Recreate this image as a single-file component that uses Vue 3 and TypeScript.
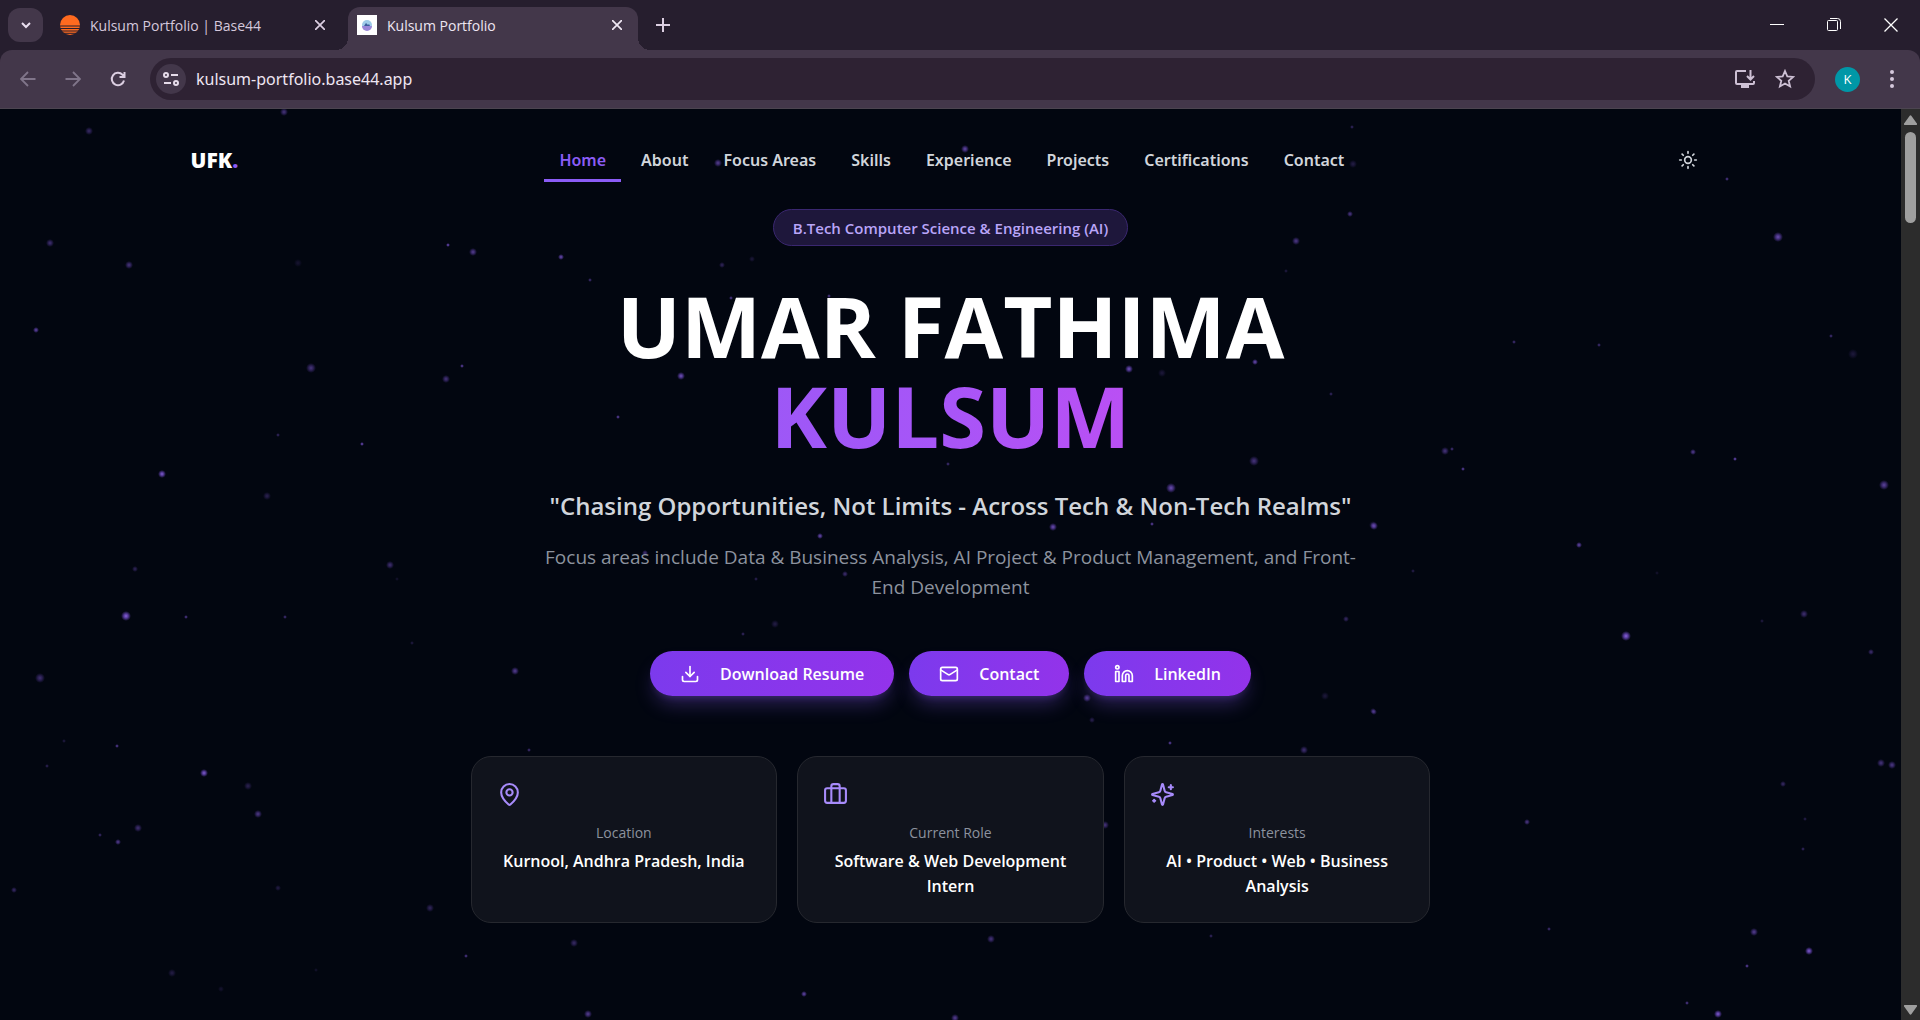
<script setup lang="ts">
interface Star {
  x: number
  y: number
  r: number
  o: number
}

interface Card {
  label: string
  value: string
  paths: string[]
}

const navItems: string[] = ['Home', 'About', 'Focus Areas', 'Skills', 'Experience', 'Projects', 'Certifications', 'Contact']

const actions: { label: string; paths: string[] }[] = [
  {
    label: 'Download Resume',
    paths: ['M21 15v4a2 2 0 0 1-2 2H5a2 2 0 0 1-2-2v-4', 'M7 10l5 5 5-5', 'M12 15V3'],
  },
  {
    label: 'Contact',
    paths: ['M4 4h16a2 2 0 0 1 2 2v12a2 2 0 0 1-2 2H4a2 2 0 0 1-2-2V6a2 2 0 0 1 2-2z', 'M22 7l-9 5.7a2 2 0 0 1-2 0L2 7'],
  },
  {
    label: 'LinkedIn',
    paths: [
      'M16 8a6 6 0 0 1 6 6v7h-4v-7a2 2 0 0 0-4 0v7h-4v-7a6 6 0 0 1 6-6z',
      'M2 9h4v12H2z',
      'M4 2a2 2 0 1 1 0 4a2 2 0 1 1 0-4z',
    ],
  },
]

const cards: Card[] = [
  {
    label: 'Location',
    value: 'Kurnool, Andhra Pradesh, India',
    paths: [
      'M20 10c0 4.993-5.539 10.193-7.399 11.799a1 1 0 0 1-1.202 0C9.539 20.193 4 14.993 4 10a8 8 0 0 1 16 0',
      'M12 7a3 3 0 1 1 0 6a3 3 0 1 1 0-6z',
    ],
  },
  {
    label: 'Current Role',
    value: 'Software & Web Development Intern',
    paths: [
      'M16 20V4a2 2 0 0 0-2-2h-4a2 2 0 0 0-2 2v16',
      'M4 6h16a2 2 0 0 1 2 2v10a2 2 0 0 1-2 2H4a2 2 0 0 1-2-2V8a2 2 0 0 1 2-2z',
    ],
  },
  {
    label: 'Interests',
    value: 'AI • Product • Web • Business Analysis',
    paths: [
      'M9.937 15.5A2 2 0 0 0 8.5 14.063l-6.135-1.582a.5.5 0 0 1 0-.962L8.5 9.936A2 2 0 0 0 9.937 8.5l1.582-6.135a.5.5 0 0 1 .963 0L14.063 8.5A2 2 0 0 0 15.5 9.937l6.135 1.581a.5.5 0 0 1 0 .964L15.5 14.063a2 2 0 0 0-1.437 1.437l-1.582 6.135a.5.5 0 0 1-.963 0z',
      'M20 3v4',
      'M22 5h-4',
      'M4 17v2',
      'M5 18H3',
    ],
  },
]

// x, y, radius, opacity; measured from the top left of the page area
const starData: number[][] = [
  [50, 134, 4, 0.45], [129, 156, 4, 0.5], [298, 154, 4, 0.15], [448, 136, 2, 0.8], [473, 143, 4, 0.6],
  [561, 148, 3, 0.75], [590, 171, 2, 0.5], [36, 221, 3, 0.7], [311, 259, 5, 0.5], [462, 257, 2, 0.7],
  [446, 270, 4, 0.5], [278, 326, 2, 0.4], [362, 335, 2, 0.8], [162, 365, 4, 0.9], [267, 387, 4, 0.3],
  [135, 460, 3, 0.35], [390, 456, 4, 0.45], [397, 470, 2, 0.15], [126, 507, 5, 0.95], [186, 508, 2, 0.6],
  [285, 508, 2, 0.5], [412, 534, 2, 0.25], [515, 562, 4, 0.6], [40, 569, 5, 0.45], [64, 632, 2, 0.25],
  [117, 637, 2, 0.65], [47, 657, 2, 0.35], [204, 664, 4, 0.9], [248, 677, 4, 0.3], [258, 705, 4, 0.55],
  [138, 719, 4, 0.45], [100, 726, 2, 0.45], [118, 733, 3, 0.6], [14, 781, 3, 0.4], [278, 779, 3, 0.25],
  [430, 799, 4, 0.35], [529, 641, 2, 0.5], [574, 834, 4, 0.4], [466, 847, 2, 0.6], [316, 861, 2, 0.15],
  [172, 864, 4, 0.25], [221, 880, 3, 0.15], [588, 905, 4, 0.6], [1778, 128, 5, 0.75], [1514, 233, 2, 0.5],
  [1599, 236, 2, 0.5], [1831, 227, 2, 0.5], [1853, 245, 5, 0.2], [1445, 342, 4, 0.5], [1452, 340, 2, 0.5],
  [1463, 360, 2, 0.7], [1693, 343, 3, 0.6], [1735, 350, 2, 0.8], [1884, 376, 5, 0.65], [1374, 417, 4, 0.7],
  [1579, 436, 3, 0.7], [1413, 462, 2, 0.3], [1657, 464, 2, 0.15], [1804, 505, 4, 0.45], [1762, 512, 2, 0.25],
  [1626, 527, 5, 0.95], [1871, 543, 3, 0.45], [1374, 603, 3, 0.45], [1881, 654, 4, 0.5], [1892, 656, 4, 0.55],
  [1783, 675, 3, 0.4], [1527, 713, 3, 0.55], [1805, 710, 2, 0.3], [1803, 740, 2, 0.4], [1549, 820, 2, 0.5],
  [1754, 823, 4, 0.6], [1809, 842, 4, 0.9], [1747, 857, 2, 0.7], [1687, 894, 2, 0.6], [1718, 905, 4, 0.9],
  [722, 156, 3, 0.35], [731, 189, 2, 0.6], [829, 187, 2, 0.6], [681, 267, 4, 0.8], [1129, 260, 4, 0.8],
  [1162, 264, 4, 0.2], [1255, 253, 3, 0.75], [618, 308, 2, 0.7], [948, 355, 2, 0.5], [1254, 352, 5, 0.5],
  [1171, 379, 5, 0.75], [1053, 418, 4, 0.75], [1152, 415, 2, 0.7], [820, 427, 3, 0.75], [645, 444, 3, 0.5],
  [845, 465, 3, 0.45], [756, 470, 2, 0.35], [1286, 162, 2, 0.25], [679, 398, 3, 0.25], [965, 40, 4, 0.7],
  [1352, 18, 2, 0.4], [1353, 55, 4, 0.25], [1350, 105, 3, 0.55], [1296, 132, 4, 0.55], [718, 54, 4, 0.6],
  [752, 150, 3, 0.2], [89, 22, 4, 0.4], [284, 3, 4, 0.5], [1727, 70, 2, 0.6], [1331, 285, 2, 0.4],
  [775, 515, 4, 0.25], [743, 525, 2, 0.4], [1087, 589, 4, 0.6], [1092, 611, 3, 0.3], [1325, 587, 4, 0.2],
  [1373, 602, 3, 0.4], [1304, 641, 4, 0.45], [1170, 634, 2, 0.7], [1105, 716, 4, 0.5], [991, 830, 4, 0.5],
  [804, 885, 3, 0.7], [955, 909, 4, 0.6], [1211, 827, 2, 0.4], [1346, 510, 3, 0.4], [1373, 416, 4, 0.3],
]

const stars: Star[] = starData.map(([x, y, r, o]) => ({ x, y, r, o }))
</script>

<template>
  <div class="window">
    <div class="tabstrip">
      <button class="tab-search" aria-label="Search tabs">
        <svg width="12" height="12" viewBox="0 0 12 12" fill="none" stroke="#eadff0" stroke-width="2"><path d="M2 4l4 4 4-4" /></svg>
      </button>
      <div class="tab first">
        <svg class="favicon" width="20" height="20" viewBox="0 0 20 20">
          <circle cx="10" cy="10" r="10" fill="#ff6a1f" />
          <path d="M0 11h20M0 13.500h20M1 16h18M3 18.300h14" stroke="#261e2e" stroke-width="1" />
        </svg>
        <span class="tab-title">Kulsum Portfolio | Base44</span>
        <button class="tab-close" aria-label="Close tab">
          <svg width="10" height="10" viewBox="0 0 10 10" stroke="#dccfe2" stroke-width="1.700"><path d="M0 0l10 10M10 0L0 10" /></svg>
        </button>
      </div>
      <div class="tab active">
        <svg class="favicon" width="20" height="20" viewBox="0 0 20 20">
          <path d="M0 0h20v20H0z" fill="#fff" />
          <circle cx="10" cy="10" r="5" fill="#9ecbe8" />
          <path d="M5 11a5 5 0 0 0 10 0z" fill="#9a86d8" />
          <path d="M7 11l2-3 2 2 1-1 1 2z" fill="#3b5c9c" />
        </svg>
        <span class="tab-title">Kulsum Portfolio</span>
        <button class="tab-close" aria-label="Close tab">
          <svg width="10" height="10" viewBox="0 0 10 10" stroke="#f0e8f4" stroke-width="1.700"><path d="M0 0l10 10M10 0L0 10" /></svg>
        </button>
      </div>
      <button class="new-tab" aria-label="New tab">
        <svg width="14" height="14" viewBox="0 0 14 14" stroke="#dccfe2" stroke-width="2"><path d="M7 0v14M0 7h14" /></svg>
      </button>
      <div class="controls">
        <button aria-label="Minimize">
          <svg width="14" height="14" viewBox="0 0 14 14" stroke="#fff"><path d="M0 6.500h14" /></svg>
        </button>
        <button aria-label="Restore">
          <svg width="14" height="14" viewBox="0 0 14 14" fill="none" stroke="#fff">
            <rect x="0.500" y="2.500" width="10" height="10" rx="1" />
            <path d="M3 .5h7.500a3 3 0 0 1 3 3V11" />
          </svg>
        </button>
        <button aria-label="Close">
          <svg width="14" height="14" viewBox="0 0 14 14" stroke="#fff" stroke-width="1.300"><path d="M.5.5l13 13M13.500.5l-13 13" /></svg>
        </button>
      </div>
    </div>

    <div class="toolbar">
      <button class="tool" aria-label="Back">
        <svg width="16" height="16" viewBox="0 0 16 16" fill="none" stroke="#80758a" stroke-width="1.800"><path d="M15.500 8H1.500M8 1L1 8l7 7" /></svg>
      </button>
      <button class="tool" aria-label="Forward">
        <svg width="16" height="16" viewBox="0 0 16 16" fill="none" stroke="#80758a" stroke-width="1.800"><path d="M.5 8h14M8 1l7 7-7 7" /></svg>
      </button>
      <button class="tool" aria-label="Reload">
        <svg width="16" height="16" viewBox="0 0 16 16" fill="none" stroke="#dccfe2" stroke-width="2"><path d="M14 9.500A6.200 6.200 0 1 1 12.500 3.700L14.500 5.500M14.500 1v5H9.500" /></svg>
      </button>
      <div class="omnibox">
        <button class="site-info" aria-label="Site information">
          <svg width="16" height="14" viewBox="0 0 16 14" fill="none" stroke="#e6dcea" stroke-width="2">
            <circle cx="3" cy="3" r="2" />
            <path d="M8 3h7M1 11h7" />
            <circle cx="13" cy="11" r="2" />
          </svg>
        </button>
        <input class="url" type="text" aria-label="Address" value="kulsum-portfolio.base44.app" />
        <button class="omni-icon" aria-label="Install app">
          <svg width="20" height="18" viewBox="0 0 20 18" fill="none" stroke="#cdc0d4" stroke-width="2">
            <path d="M11 1H2a1 1 0 0 0-1 1v11a1 1 0 0 0 1 1h16a1 1 0 0 0 1-1v-2M15.500 0v9M12 6l3.500 3.500L19 6" />
            <path d="M7 15.500h6v1.500H7z" />
          </svg>
        </button>
        <button class="omni-icon" aria-label="Bookmark">
          <svg width="20" height="20" viewBox="0 0 20 20" fill="none" stroke="#cdc0d4" stroke-width="1.800"><path d="M10 2l2.300 5.400 5.900.5-4.500 3.900 1.400 5.700L10 14.500l-5.100 3 1.400-5.700-4.500-3.900 5.900-.5z" /></svg>
        </button>
      </div>
      <button class="avatar" aria-label="Profile">K</button>
      <button class="menu" aria-label="Menu">
        <svg width="4" height="18" viewBox="0 0 4 18" fill="#d5c8dc"><circle cx="2" cy="2" r="2" /><circle cx="2" cy="9" r="2" /><circle cx="2" cy="16" r="2" /></svg>
      </button>
    </div>

    <div class="viewport">
      <div class="page">
        <svg class="stars" aria-hidden="true">
          <defs>
            <radialGradient id="glow">
              <stop offset="0" stop-color="#8f68e8" />
              <stop offset="0.450" stop-color="#7b52d6" stop-opacity="0.700" />
              <stop offset="1" stop-color="#6b45c8" stop-opacity="0" />
            </radialGradient>
          </defs>
          <circle v-for="(s, i) in stars" :key="i" :cx="s.x" :cy="s.y" :r="s.r" :opacity="s.o" fill="url(#glow)" />
        </svg>

        <header class="header">
          <a class="logo" href="#home">UFK<span>.</span></a>
          <nav class="nav">
            <a v-for="(item, i) in navItems" :key="item" href="#" :class="{ current: i === 0 }">{{ item }}</a>
          </nav>
          <button class="theme" aria-label="Toggle theme">
            <svg width="20" height="20" viewBox="0 0 24 24" fill="none" stroke="#d1d5db" stroke-width="2" stroke-linecap="round">
              <circle cx="12" cy="12" r="4" />
              <path d="M12 2v2M12 20v2M4.930 4.930l1.410 1.410M17.660 17.660l1.410 1.410M2 12h2M20 12h2M6.340 17.660l-1.410 1.410M19.070 4.930l-1.410 1.410" />
            </svg>
          </button>
        </header>

        <main class="hero">
          <div class="pill">B.Tech Computer Science &amp; Engineering (AI)</div>
          <h1>UMAR FATHIMA<span>KULSUM</span></h1>
          <p class="tagline">"Chasing Opportunities, Not Limits - Across Tech &amp; Non-Tech Realms"</p>
          <p class="summary">Focus areas include Data &amp; Business Analysis, AI Project &amp; Product Management, and Front-End Development</p>
          <div class="actions">
            <button v-for="a in actions" :key="a.label">
              <svg width="20" height="20" viewBox="0 0 24 24"><path v-for="p in a.paths" :key="p" :d="p" /></svg>
              {{ a.label }}
            </button>
          </div>
          <div class="cards">
            <section v-for="c in cards" :key="c.label" class="card">
              <svg width="25" height="25" viewBox="0 0 24 24"><path v-for="p in c.paths" :key="p" :d="p" /></svg>
              <div class="card-label">{{ c.label }}</div>
              <div class="card-value">{{ c.value }}</div>
            </section>
          </div>
        </main>
      </div>
      <div class="scrollbar">
        <svg width="13" height="10" viewBox="0 0 13 10" fill="#9f9f9f"><path d="M5.500 1a1.200 1.200 0 0 1 2 0L12.500 8a1 1 0 0 1-1 2h-10a1 1 0 0 1-1-2z" /></svg>
        <div class="thumb"></div>
        <svg class="down" width="13" height="10" viewBox="0 0 13 10" fill="#9f9f9f"><path d="M5.500 9a1.200 1.200 0 0 0 2 0L12.500 2a1 1 0 0 0-1-2h-10a1 1 0 0 0-1 2z" /></svg>
      </div>
    </div>
  </div>
</template>

<style>
body {
  margin: 0;
  background: #020610;
}
</style>

<style scoped>
* {
  box-sizing: border-box;
}

.window {
  display: flex;
  flex-direction: column;
  min-height: 100vh;
  font-family: "Open Sans", "Noto Sans", sans-serif;
  background: #261e2e;
}

button {
  display: flex;
  align-items: center;
  justify-content: center;
  padding: 0;
  border: 0;
  background: none;
  font-family: inherit;
}

svg {
  display: block;
  flex: none;
}

.tabstrip {
  display: flex;
  align-items: center;
  height: 50px;
  padding-left: 8px;
  padding-right: 1px;
}

.tab-search {
  width: 35px;
  height: 34px;
  border-radius: 12px;
  background: #43374a;
}

.tab {
  display: flex;
  align-items: center;
  gap: 10px;
  height: 43px;
  margin-top: 7px;
  padding-bottom: 7px;
  color: #d5c8dc;
  font-size: 14px;
}

.first {
  width: 305px;
  padding-left: 17px;
  padding-right: 23px;
}

.active {
  position: relative;
  width: 290px;
  padding-left: 9px;
  padding-right: 16px;
  border-radius: 12px 12px 0 0;
  background: #43374a;
  color: #eee6f2;
}

.active::before,
.active::after {
  content: "";
  position: absolute;
  bottom: 0;
  width: 12px;
  height: 12px;
}

.active::before {
  right: 100%;
  background: radial-gradient(circle at 0 0, transparent 12px, #43374a 12px);
}

.active::after {
  left: 100%;
  background: radial-gradient(circle at 100% 0, transparent 12px, #43374a 12px);
}

.tab-title {
  flex: 1;
  white-space: nowrap;
}

.new-tab {
  width: 50px;
  height: 34px;
}

.controls {
  display: flex;
  margin-left: auto;
}

.controls button {
  width: 57px;
  height: 48px;
}

.toolbar {
  display: flex;
  align-items: center;
  height: 59px;
  padding: 0 16px 0 5px;
  border-bottom: 1px solid #4c4550;
  border-radius: 12px 12px 0 0;
  background: #43374a;
}

.tool {
  width: 45px;
  height: 40px;
}

.omnibox {
  display: flex;
  flex: 1;
  align-items: center;
  height: 42px;
  margin-left: 10px;
  padding: 0 10px 0 6px;
  border-radius: 21px;
  background: #2e2233;
}

.site-info {
  width: 30px;
  height: 30px;
  border-radius: 50%;
  background: #43374a;
}

.url {
  flex: 1;
  min-width: 0;
  padding: 0 10px;
  border: 0;
  outline: 0;
  background: none;
  color: #eee6f2;
  font: 16px "Noto Sans", "Open Sans", sans-serif;
}

.omni-icon {
  width: 40px;
  height: 40px;
}

.avatar {
  width: 25px;
  height: 25px;
  margin: 0 20px;
  border-radius: 50%;
  background: #0097a7;
  color: #fff;
  font-size: 13px;
}

.menu {
  width: 24px;
  height: 30px;
}

.viewport {
  display: flex;
  flex: 1;
  background: #020610;
}

.page {
  position: relative;
  flex: 1;
  overflow: hidden;
}

.scrollbar {
  display: flex;
  flex-direction: column;
  align-items: center;
  width: 19px;
  padding: 6px 0 5px;
  background: #2c2c2c;
}

.thumb {
  width: 11px;
  height: 91px;
  margin-top: 7px;
  border-radius: 6px;
  background: #9f9f9f;
}

.down {
  margin-top: auto;
}

.stars {
  position: absolute;
  inset: 0;
  width: 100%;
  height: 100%;
}

.header {
  position: relative;
  display: flex;
  align-items: center;
  justify-content: space-between;
  max-width: 1600px;
  margin: 0 auto;
  padding: 28px 40px 0;
}

.logo {
  color: #fff;
  font-size: 21px;
  font-weight: 800;
  line-height: 30px;
  text-decoration: none;
}

.logo span {
  color: #8b5cf6;
}

.nav {
  display: flex;
  gap: 5px;
}

.nav a {
  height: 45px;
  padding: 0 15px;
  border-bottom: 3px solid transparent;
  color: #d1d5db;
  font-family: "Noto Sans", "Open Sans", sans-serif;
  font-size: 16px;
  font-weight: 600;
  line-height: 47px;
  text-decoration: none;
}

.nav .current {
  border-image: linear-gradient(#8b5cf6, #8b5cf6) 1;
  border-bottom-color: #8b5cf6;
  color: #8b5cf6;
}

.theme {
  width: 45px;
  height: 45px;
}

.hero {
  position: relative;
  display: flex;
  flex-direction: column;
  align-items: center;
  max-width: 960px;
  margin: 27px auto 97px;
  text-align: center;
}

.pill {
  height: 37px;
  padding: 0 19px;
  border: 1px solid #3a2770;
  border-radius: 19px;
  background: #1e173b;
  color: #b9a5f8;
  font-size: 15px;
  font-weight: 600;
  line-height: 37px;
}

h1 {
  width: 100%;
  margin: 34px 0 28px;
  color: #fff;
  font-size: 85px;
  font-weight: 700;
  line-height: 90px;
}

h1 span {
  display: block;
  background: linear-gradient(to right, #8b5cf6, #a855f7, #d946ef);
  background-clip: text;
  color: transparent;
}

.tagline {
  margin: 0 0 19px;
  color: #d1d5db;
  font-size: 24px;
  font-weight: 600;
  line-height: 35px;
}

.summary {
  max-width: 840px;
  margin: 0 0 49px;
  color: #8c929e;
  font-size: 19px;
  line-height: 30px;
}

.actions {
  display: flex;
  gap: 15px;
  margin-bottom: 60px;
}

.actions button {
  gap: 20px;
  height: 45px;
  padding: 0 30px;
  border-radius: 23px;
  background: linear-gradient(to right, #7c3aed, #9333ea);
  box-shadow: 0 12px 19px -4px rgba(139, 92, 246, 0.3), 0 5px 8px -5px rgba(139, 92, 246, 0.3);
  color: #fff;
  font-size: 16px;
  font-weight: 600;
}

.actions svg,
.card svg {
  fill: none;
  stroke: currentColor;
  stroke-width: 2;
  stroke-linecap: round;
  stroke-linejoin: round;
}

.cards {
  display: grid;
  grid-template-columns: repeat(3, 1fr);
  gap: 20px;
  width: 100%;
}

.card {
  padding: 25px 25px 23px;
  border: 1px solid #26282f;
  border-radius: 20px;
  background: #10131c;
}

.card svg {
  color: #a78bfa;
}

.card-label {
  margin: 16px 0 6px;
  color: #8c929e;
  font-size: 14px;
  font-weight: 500;
  line-height: 20px;
}

.card-value {
  color: #fff;
  font-size: 16px;
  font-weight: 600;
  line-height: 25px;
}
</style>
